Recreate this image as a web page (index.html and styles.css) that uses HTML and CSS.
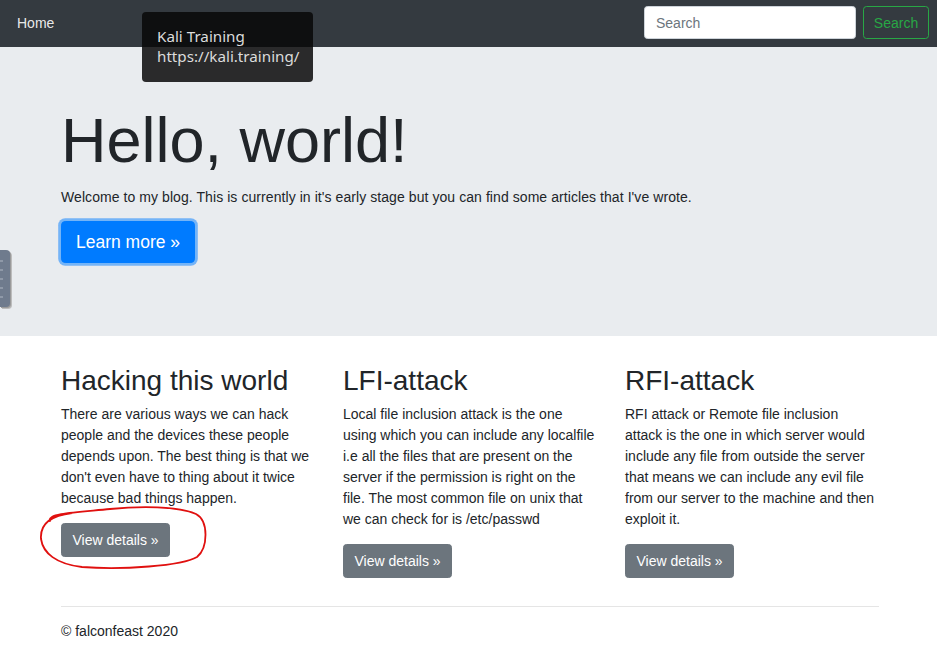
FILE: index.html
```html
<!DOCTYPE html>
<html lang="en">
<head>
<meta charset="utf-8">
<title>Blog</title>
<link rel="stylesheet" href="styles.css">
</head>
<body>
<nav class="navbar">
  <a class="nav-link" href="#">Home</a>
  <form class="search-form">
    <input class="search-input" type="text" placeholder="Search">
    <button class="btn-search" type="button">Search</button>
  </form>
</nav>

<main>
  <section class="jumbotron">
    <div class="container">
      <h1 class="display">Hello, world!</h1>
      <p class="intro">Welcome to my blog. This is currently in it's early stage but you can find some articles that I've wrote.</p>
      <p><a class="btn-primary" href="#">Learn more &raquo;</a></p>
    </div>
  </section>

  <div class="container">
    <div class="row">
      <div class="col">
        <h2>Hacking this world</h2>
        <p>There are various ways we can hack people and the devices these people depends upon. The best thing is that we don't even have to thing about it twice because bad things happen.</p>
        <p><a class="btn-secondary" href="#">View details &raquo;</a></p>
      </div>
      <div class="col">
        <h2>LFI-attack</h2>
        <p>Local file inclusion attack is the one using which you can include any localfile i.e all the files that are present on the server if the permission is right on the file. The most common file on unix that we can check for is /etc/passwd</p>
        <p><a class="btn-secondary" href="#">View details &raquo;</a></p>
      </div>
      <div class="col">
        <h2>RFI-attack</h2>
        <p>RFI attack or Remote file inclusion attack is the one in which server would include any file from outside the server that means we can include any evil file from our server to the machine and then exploit it.</p>
        <p><a class="btn-secondary" href="#">View details &raquo;</a></p>
      </div>
    </div>
    <hr class="divider">
  </div>
</main>

<footer class="container">
  <p>&copy; falconfeast 2020</p>
</footer>

<div class="link-tooltip">Kali Training<br>https://kali.training/</div>
<div class="side-tab"><span></span><span></span><span></span><span></span><span></span></div>
<svg class="annotation" width="937" height="653" viewBox="0 0 937 653">
  <path d="M 50 521 C 46 513, 80 512, 110 509 C 140 506, 178 506, 196 514 C 209 521, 208 548, 197 557 C 182 566, 122 570, 82 567 C 56 564, 43 553, 41 539 C 40 526, 47 516, 72 513" fill="none" stroke="#e0100f" stroke-width="1.8" stroke-linecap="round"/>
</svg>
</body>
</html>
```

FILE: styles.css
```css
* { box-sizing: border-box; }

html, body {
  margin: 0;
  padding: 0;
}

body {
  font-family: "Liberation Sans", Arial, sans-serif;
  font-size: 14px;
  line-height: 1.5;
  color: #212529;
  background: #fff;
  width: 937px;
  height: 653px;
  overflow: hidden;
  position: relative;
}

a { text-decoration: none; }

.navbar {
  display: flex;
  align-items: center;
  justify-content: space-between;
  height: 47px;
  background: #343a40;
  padding: 0 8px 2px 17px;
}

.nav-link {
  color: rgba(255, 255, 255, 0.9);
  font-size: 14px;
  padding-top: 1px;
}

.search-form {
  display: flex;
  align-items: center;
  gap: 7px;
}

.search-input {
  width: 212px;
  height: 33px;
  border: 1px solid #ced4da;
  border-radius: 3.5px;
  background: #fff;
  padding: 0 11px;
  font-family: "Liberation Sans", Arial, sans-serif;
  font-size: 14px;
  color: #495057;
  outline: none;
}

.search-input::placeholder { color: #6c757d; }

.btn-search {
  height: 33px;
  width: 66px;
  border: 1px solid #28a745;
  border-radius: 3.5px;
  background: transparent;
  color: #28a745;
  font-family: "Liberation Sans", Arial, sans-serif;
  font-size: 14px;
  padding: 0;
}

.container {
  width: 846px;
  margin: 0 0 0 47px;
  padding: 0 14px;
}

.jumbotron {
  background: #e9ecef;
  padding: 56px 0 59px;
  margin-bottom: 28px;
}

.jumbotron p { margin: 0 0 14px; }

.jumbotron .intro {
  letter-spacing: 0.07px;
  padding-top: 1px;
  margin-bottom: 13px;
}

.display {
  font-size: 63px;
  font-weight: 300;
  line-height: 1.2;
  margin: 0 0 7px;
}

.btn-primary {
  display: inline-block;
  background: #007bff;
  border: 1px solid #007bff;
  color: #fff;
  font-size: 17.5px;
  line-height: 1.5;
  padding: 7px 14px;
  border-radius: 4.2px;
  box-shadow: 0 0 0 2.8px rgba(0, 123, 255, 0.5);
}

.row {
  display: flex;
  margin: 0 -14px;
}

.col {
  width: 282px;
  padding: 0 14px;
}

.col h2 {
  font-size: 28px;
  font-weight: 500;
  line-height: 1.2;
  margin: 0 0 7px;
}

.col p { margin: 0 0 14px; }

.btn-secondary {
  display: inline-block;
  background: #6c757d;
  border: 1px solid #6c757d;
  color: #fff;
  font-size: 14px;
  line-height: 1.5;
  padding: 5.25px 10.5px;
  border-radius: 3.5px;
}

.divider {
  margin: 14px 0;
  border: 0;
  border-top: 1px solid rgba(0, 0, 0, 0.1);
  height: 0;
}

footer p { margin: 0 0 14px; }

.link-tooltip {
  position: absolute;
  left: 142px;
  top: 12px;
  width: 171px;
  height: 70px;
  border-radius: 4px;
  background: rgba(8, 8, 8, 0.85);
  color: #dcdcdc;
  font-family: "Noto Sans", "DejaVu Sans", sans-serif;
  font-size: 15.2px;
  line-height: 20px;
  padding: 14px 0 0 15px;
  white-space: nowrap;
}

.side-tab {
  position: absolute;
  left: 0;
  top: 250px;
  width: 10px;
  height: 57px;
  background: #6f7b8d;
  border-radius: 0 4px 4px 0;
  box-shadow: 1px 1px 0 #9a9a9a, 2px 2px 0 #bcbcbc;
  display: flex;
  flex-direction: column;
  justify-content: center;
  gap: 7px;
}

.side-tab span {
  display: block;
  width: 3px;
  height: 2px;
  background: #8f99a8;
}

.annotation {
  position: absolute;
  left: 0;
  top: 0;
  pointer-events: none;
}
```
